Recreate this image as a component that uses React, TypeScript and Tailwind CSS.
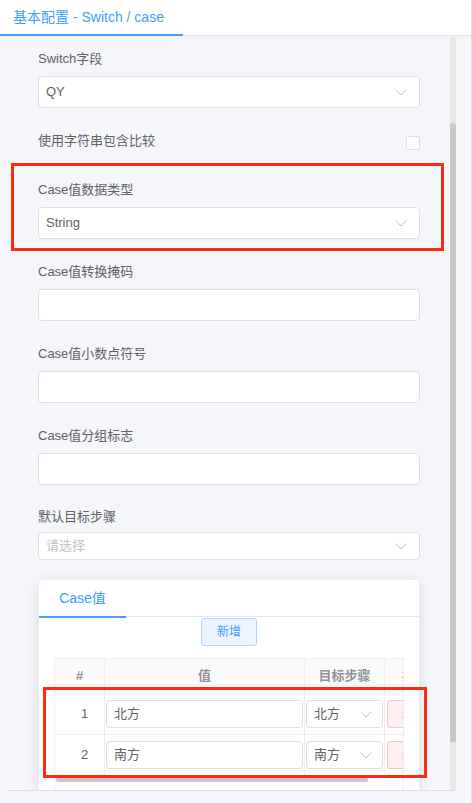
import React from "react";

const FONT = "font-['Liberation_Sans','Noto_Sans_CJK_SC',sans-serif]";

function Chevron({ className = "" }: { className?: string }) {
  return (
    <svg width="12" height="7" viewBox="0 0 12 7" className={className} fill="none">
      <path d="M0.5 0.5L6 6L11.5 0.5" stroke="#c0c4cc" strokeWidth="1" />
    </svg>
  );
}

function Field({ label, value, placeholder, select, small }: {
  label: string;
  value?: string;
  placeholder?: string;
  select?: boolean;
  small?: boolean;
}) {
  return (
    <div>
      <div className="h-5 leading-5 text-[13px] text-[#606266]">{label}</div>
      <div
        className={`${small ? "mt-[5px] h-[28px]" : "mt-[7px] h-[32px]"} flex items-center justify-between rounded-[4px] border border-[#dcdfe6] bg-white pl-[7px] pr-[12px] text-[13px]`}
      >
        <span className={value ? "text-[#606266]" : "text-[#c0c4cc]"}>{value || placeholder}</span>
        {select && <Chevron />}
      </div>
    </div>
  );
}

const rows = [
  { n: 1, v: "北方", t: "北方" },
  { n: 2, v: "南方", t: "南方" },
];

function CaseTable() {
  return (
    <div className="mx-[15px] mt-[12px] overflow-hidden border-l border-r border-[#ebeef5]">
      <div className="w-[420px]">
        <div className="flex h-[36px] border-t border-b border-[#ebeef5] bg-[#fafafa] text-[13px] text-[#909399] font-bold">
          <div className="w-[50px] flex items-center justify-center border-r border-[#ebeef5]">#</div>
          <div className="w-[200px] flex items-center justify-center border-r border-[#ebeef5]">值</div>
          <div className="w-[80px] flex items-center justify-center border-r border-[#ebeef5]">目标步骤</div>
          <div className="w-[90px] flex items-center pl-[17px] text-[#f5a04a]">操作</div>
        </div>
        {rows.map((r) => (
          <div key={r.n} className="flex h-[41px] border-b border-[#ebeef5] text-[13px] text-[#606266]">
            <div className="w-[50px] flex items-center justify-center pl-[10px] border-r border-[#ebeef5]">{r.n}</div>
            <div className="w-[200px] flex items-center px-px border-r border-[#ebeef5]">
              <div className="h-[28px] w-full flex items-center rounded-[4px] border border-[#dcdfe6] bg-white pl-[7px]">{r.v}</div>
            </div>
            <div className="w-[80px] flex items-center px-px border-r border-[#ebeef5]">
              <div className="h-[28px] w-full flex items-center justify-between rounded-[4px] border border-[#dcdfe6] bg-white pl-[7px] pr-[10px]">
                <span>{r.t}</span>
                <Chevron />
              </div>
            </div>
            <div className="w-[90px] flex items-center pl-[2px]">
              <div className="h-[28px] flex items-center rounded-[3px] border border-[#fbc4c4] bg-[#fef0f0] px-[14px] text-[12px] text-[#f56c6c]">删除</div>
            </div>
          </div>
        ))}
        <div className="h-[20px] pt-px">
          <div className="ml-px h-[5px] w-[312px] rounded-[3px] bg-[#c8c8c8]" />
        </div>
      </div>
    </div>
  );
}

export default function App() {
  return (
    <div className={`${FONT} relative h-[803px] w-[472px] overflow-hidden border-r border-[#dcdfe6] bg-[#f5f6fa]`}>
      {/* top tab bar */}
      <div className="flex h-[36px] items-start border-b border-[#e4e7ed] bg-white">
        <div className="-mb-px flex h-[36px] w-[183px] items-center border-b-2 border-[#409eff] pl-[13px] text-[14px] text-[#409eff]">
          基本配置 - Switch / case
        </div>
      </div>

      <div className="flex h-[754px]">
        {/* form */}
        <div className="w-[450px] overflow-hidden pl-[38px] pr-[30px] pt-[13px]">
          <Field label="Switch字段" value="QY" select />
          <div className="mt-[23px] flex h-[26px] items-start justify-between">
            <div className="h-5 leading-5 text-[13px] text-[#606266]">使用字符串包含比较</div>
            <div className="mt-[5px] h-[14px] w-[14px] rounded-[2px] border border-[#dcdfe6] bg-white" />
          </div>
          <div className="mt-[23px]">
            <Field label="Case值数据类型" value="String" select />
          </div>
          <div className="mt-[23px]">
            <Field label="Case值转换掩码" />
          </div>
          <div className="mt-[23px]">
            <Field label="Case值小数点符号" />
          </div>
          <div className="mt-[23px]">
            <Field label="Case值分组标志" />
          </div>
          <div className="mt-[22px]">
            <Field label="默认目标步骤" placeholder="请选择" select small />
          </div>

          {/* Case值 card */}
          <div className="mt-[19px] rounded-[4px] border border-[#ebeef5] bg-white shadow-[0_2px_12px_0_rgba(0,0,0,0.1)]">
            <div className="flex h-[37px] border-b border-[#e4e7ed]">
              <div className="-mb-px flex h-[38px] w-[87px] items-center justify-center border-b-2 border-[#409eff] text-[14px] text-[#409eff]">
                Case值
              </div>
            </div>
            <div className="flex justify-center pt-px">
              <div className="flex h-[28px] items-center rounded-[3px] border border-[#b3d8ff] bg-[#ecf5ff] px-[15px] text-[12px] text-[#409eff]">
                新增
              </div>
            </div>
            <CaseTable />
          </div>
        </div>

        {/* vertical scrollbar */}
        <div className="mt-px h-[753px] w-[6px] bg-[#e8e8e8] pt-[86px]">
          <div className="h-[619px] w-[6px] rounded-t-[3px] bg-[#c8c8c8]" />
        </div>
      </div>

      <div className="ml-[8px] w-[448px] border-t border-[#dcdfe6]" />

      {/* annotation boxes */}
      <div className="absolute left-[11px] top-[163px] h-[88px] w-[433px] border-[3px] border-[#fc2a0f]" />
      <div className="absolute left-[43px] top-[687px] h-[91px] w-[384px] border-[3px] border-[#fc2a0f]" />
    </div>
  );
}
